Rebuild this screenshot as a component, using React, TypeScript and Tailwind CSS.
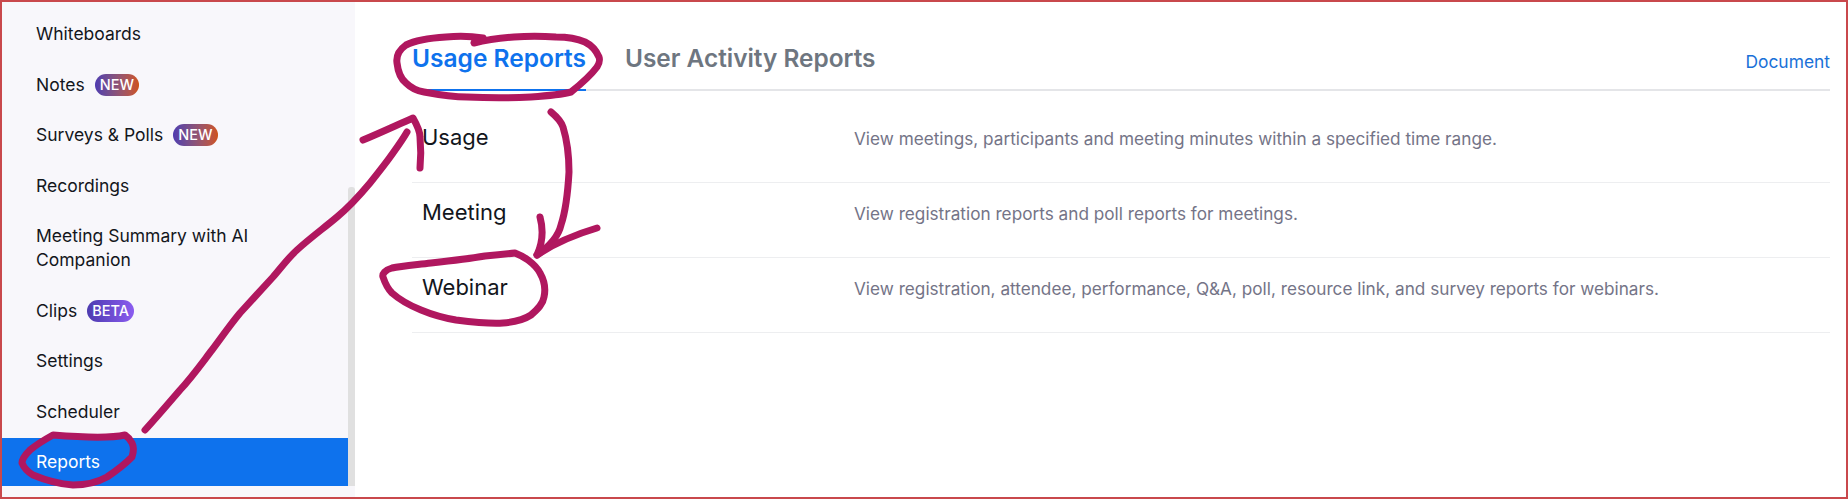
import React from 'react';

const navItems = [
  { label: 'Whiteboards' },
  { label: 'Notes', badge: 'NEW' },
  { label: 'Surveys & Polls', badge: 'NEW' },
  { label: 'Recordings' },
  { label: 'Meeting Summary with AI Companion' },
  { label: 'Clips', badge: 'BETA' },
  { label: 'Settings' },
  { label: 'Scheduler' },
  { label: 'Reports', active: true },
];

const reportRows = [
  { name: 'Usage', desc: 'View meetings, participants and meeting minutes within a specified time range.' },
  { name: 'Meeting', desc: 'View registration reports and poll reports for meetings.' },
  { name: 'Webinar', desc: 'View registration, attendee, performance, Q&A, poll, resource link, and survey reports for webinars.' },
];

const Badge = ({ text }: { text: string }) => (
  <span
    className={`ml-[10px] inline-flex h-[22px] items-center rounded-full px-[5px] text-[14.5px] font-medium text-white ${
      text === 'NEW'
        ? 'bg-gradient-to-r from-[#4f3ab0] to-[#cf5210]'
        : 'bg-gradient-to-r from-[#4d3bb0] to-[#8b5cf0]'
    }`}
  >
    {text}
  </span>
);

// hand drawn marker strokes over the page
const Annotations = () => (
  <svg
    className="absolute -left-[2px] -top-[2px] h-[499px] w-[1848px]"
    viewBox="0 0 1848 499"
    fill="none"
    stroke="#b0175f"
    strokeWidth="7"
    strokeLinecap="round"
    strokeLinejoin="round"
  >
    <path d="M483 38C470 36 458 36 446 37C430 38 414 41 406 45C399 50 396 56 397 63C398 72 401 79 406 83C412 89 418 91 424 92C440 95 453 97 467 97C488 98 510 98 531 97C546 96 560 95 571 92C581 84 591 75 597 67C600 62 600 60 599 57C596 50 591 45 585 42C576 38 566 37 556 37C542 36 527 36 514 37C500 38 486 40 474 43" />
    <path d="M551 112C557 117 561 121 563 127C567 140 569 155 569 172C568 190 566 210 561 225C558 238 547 248 537 255" />
    <path d="M540 217C543 228 543 242 537 255M597 228C580 233 558 241 537 255" />
    <path d="M515 253C506 254 496 255 485 256C467 259 449 261 431 263C414 265 401 266 392 268C385 270 382 274 383 277C385 283 387 288 392 293C401 301 411 306 421 310C433 315 444 318 456 320C472 322 489 324 503 323C515 322 525 319 531 315C538 309 543 304 544 297C546 288 544 280 540 273C537 267 532 263 528 260C524 257 520 255 515 253Z" />
    <path d="M145 430C156 418 168 404 180 390C192 377 202 363 212 350C221 338 230 325 240 313C251 301 262 289 273 277C281 268 288 258 297 250C310 238 324 228 337 217C349 207 360 195 370 183C378 173 386 163 393 153C398 146 403 139 407 132" />
    <path d="M363 140C380 133 397 125 413 118C417 125 420 131 420 137C421 148 421 158 420 168" />
    <path d="M125 435C112 438 90 438 53 435C44 440 36 445 30 450C25 455 22 459 22 463C24 468 28 472 33 475C45 480 58 484 73 485C87 485 98 482 107 477C116 471 125 464 132 457C134 451 134 447 132 443C130 439 128 437 125 435Z" />
  </svg>
);

export default function App() {
  return (
    <div className="relative flex h-[499px] w-[1848px] overflow-hidden border-2 border-[#c9484c] bg-white font-['Inter',sans-serif]">
      {/* Sidebar */}
      <aside className="flex h-full w-[353px] shrink-0 bg-[#f8f7fb]">
        <nav className="flex w-[346px] flex-col gap-[2.5px] pt-[8px]">
          {navItems.map((item) => (
            <div
              key={item.label}
              className={`flex min-h-[48px] items-center py-[12px] pl-[34px] pr-[30px] text-[17.5px] leading-[24px] ${
                item.active ? 'bg-[#0e72ed] text-white' : 'text-[#13161c]'
              }`}
            >
              <span>{item.label}</span>
              {item.badge && <Badge text={item.badge} />}
            </div>
          ))}
        </nav>
        <div className="flex w-[7px] flex-col pt-[185px]">
          <div className="h-[299px] rounded-t-[3px] bg-[#e0e0e0]" />
        </div>
      </aside>

      {/* Main */}
      <main className="flex-1 pl-[57px] pr-[16px]">
        <div className="flex h-[89px] items-end justify-between border-b-2 border-[#e4e5e8]">
          <div className="flex gap-[39px]">
            <div className="-mb-[2px] border-b-2 border-[#0e72ed] pb-[16px] text-[24.5px] font-semibold leading-[29px] text-[#0e72ed]">
              Usage Reports
            </div>
            <div className="pb-[16px] text-[24.4px] font-semibold leading-[29px] text-[#6e7680]">
              User Activity Reports
            </div>
          </div>
          <a className="pb-[15px] text-[17.4px] leading-[24px] text-[#1a71d8]">Document</a>
        </div>
        <div className="mt-[17px]">
          {reportRows.map((row) => (
            <div key={row.name} className="flex h-[75px] border-b border-[#edeef0] pl-[10px] pt-[15px]">
              <div className="w-[432px] text-[22px] leading-[28px] text-[#13161c]">{row.name}</div>
              <div className="pt-[2px] text-[17.2px] leading-[28px] text-[#747487]">{row.desc}</div>
            </div>
          ))}
        </div>
      </main>

      <Annotations />
    </div>
  );
}
